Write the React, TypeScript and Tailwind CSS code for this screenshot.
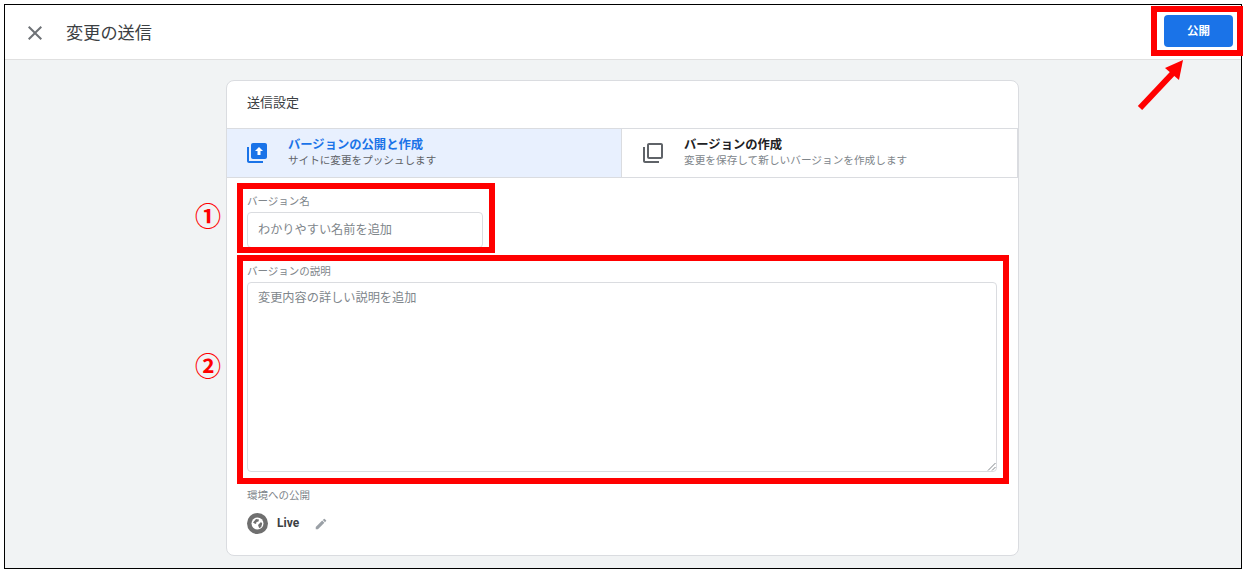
const jp = 'font-["Roboto","Noto_Sans_CJK_JP",sans-serif]'

function CloseIcon() {
  return (
    <svg width="24" height="24" viewBox="0 0 24 24" fill="#5f6368" className="opacity-90">
      <path d="M19 6.41 17.59 5 12 10.59 6.41 5 5 6.41 10.59 12 5 17.59 6.41 19 12 13.41 17.59 19 19 17.59 13.41 12z" />
    </svg>
  )
}

function PublishIcon() {
  return (
    <svg width="24" height="24" viewBox="0 0 24 24" fill="#1a73e8">
      <path d="M4 6H2v14c0 1.1.9 2 2 2h14v-2H4V6z" />
      <path d="M20 2H8c-1.1 0-2 .9-2 2v12c0 1.1.9 2 2 2h12c1.1 0 2-.9 2-2V4c0-1.100-.9-2-2-2z" />
      <path fill="#fff" d="M14 6l-4 4h2.500v4h3v-4H18z" />
    </svg>
  )
}

function CreateIcon() {
  return (
    <svg width="24" height="24" viewBox="0 0 24 24" fill="#5f6368">
      <path d="M4 6H2v14c0 1.100.9 2 2 2h14v-2H4V6z" />
      <path d="M20 2H8c-1.100 0-2 .9-2 2v12c0 1.100.9 2 2 2h12c1.100 0 2-.9 2-2V4c0-1.100-.9-2-2-2zm0 14H8V4h12v12z" />
    </svg>
  )
}

function GlobeIcon() {
  return (
    <svg width="21" height="21" viewBox="0 0 21 21">
      <circle cx="10.500" cy="10.500" r="10.500" fill="#6f6f6f" />
      <circle cx="10.500" cy="10.500" r="6" fill="#fff" />
      <path fill="#6f6f6f" d="M6 9.500l3-3.500 3 .5-.5 2-2 .5-.5 2-1.500-.5zM11 12l3-3 1.200 1.500-1 3.500-2 1.200z" />
    </svg>
  )
}

function PencilIcon() {
  return (
    <svg width="14" height="14" viewBox="0 0 24 24" fill="#9aa0a6">
      <path d="M3 17.250V21h3.750L17.810 9.940l-3.750-3.750L3 17.250zM20.710 7.040a1 1 0 0 0 0-1.410l-2.340-2.340a1 1 0 0 0-1.410 0l-1.830 1.830 3.750 3.750 1.830-1.830z" />
    </svg>
  )
}

function FieldLabel({ children }: { children: string }) {
  return <div className="text-[10.5px] leading-[14px] text-[#80868b]">{children}</div>
}

export default function App() {
  return (
    <div className={`relative h-[573px] w-[1248px] overflow-hidden bg-white pt-1 pr-[6px] pb-1 pl-1 ${jp}`}>
      <div className="h-[565px] overflow-hidden border border-black bg-[#f1f3f4]">
        <header className="flex h-[55px] items-start justify-between border-b border-[#e0e0e0] bg-white pr-2">
          <div className="mt-[14px] flex items-center">
            <div className="ml-[18px]">
              <CloseIcon />
            </div>
            <h1 className="ml-[19px] pt-[2px] text-[17.2px] font-normal text-[#3c4043]">変更の送信</h1>
          </div>
          <button className="mt-[10px] h-8 w-[69px] rounded bg-[#1a73e8] pt-[2px] text-[11.5px] font-bold text-white">公開</button>
        </header>

        <main className="mt-5 ml-[221px] h-[476px] w-[793px] rounded-lg border border-[#dadce0] bg-white">
          <div className="flex h-[48px] items-center border-b border-[#dadce0] pb-[3px] pl-[20px] text-[13px] text-[#3c4043]">
            送信設定
          </div>

          <div className="flex h-[49px] border-b border-[#dadce0]">
            <div className="flex w-[394px] items-center bg-[#e8f0fe] pl-[18px]">
              <PublishIcon />
              <div className="ml-[19px]">
                <div className="text-[12.3px] leading-[15px] font-bold text-[#1a73e8]">バージョンの公開と作成</div>
                <div className="text-[10.6px] leading-[15px] text-[#5f6368]">サイトに変更をプッシュします</div>
              </div>
            </div>
            <div className="flex flex-1 items-center border-r border-l border-[#dadce0] pl-[19px]">
              <CreateIcon />
              <div className="ml-[19px]">
                <div className="text-[12.3px] leading-[15px] font-bold text-[#202124]">バージョンの作成</div>
                <div className="text-[10.67px] leading-[15px] text-[#80868b]">変更を保存して新しいバージョンを作成します</div>
              </div>
            </div>
          </div>

          <div className="pt-[17px] pl-5">
            <FieldLabel>バージョン名</FieldLabel>
            <div className="mt-[3px] flex h-9 w-[236px] items-center rounded border border-[#dadce0] pl-[10px] text-[12.2px] text-[#80868b]">
              わかりやすい名前を追加
            </div>

            <div className="mt-[17px]">
              <FieldLabel>バージョンの説明</FieldLabel>
            </div>
            <div className="relative mt-[3px] h-[190px] w-[750px] rounded border border-[#dadce0] pt-[6px] pl-[10px] text-[12.2px] leading-[18px] text-[#80868b]">
              変更内容の詳しい説明を追加
              <svg width="9" height="9" viewBox="0 0 9 9" className="absolute right-0 bottom-0" stroke="#80868b" strokeWidth="1">
                <path d="M1 8.500 8.500 1M5 8.500 8.500 5" />
              </svg>
            </div>

            <div className="mt-[17px]">
              <FieldLabel>環境への公開</FieldLabel>
            </div>
            <div className="mt-[10px] flex items-center">
              <GlobeIcon />
              <span className="ml-[9px] pb-[2px] text-[12px] font-bold text-[#3c4043]">Live</span>
              <span className="ml-[15px]">
                <PencilIcon />
              </span>
            </div>
          </div>
        </main>
      </div>

      {/* annotations drawn over the screenshot */}
      <div className="absolute top-[6px] left-[1151px] h-[50px] w-[92px] border-[6px] border-[#ff0000]" />
      <div className="absolute top-[183px] left-[237px] h-[70px] w-[258px] border-[6px] border-[#ff0000]" />
      <div className="absolute top-[255px] left-[237px] h-[229px] w-[772px] border-[6px] border-[#ff0000]" />
      <div className="absolute top-[201px] left-[195px] text-[26px] leading-8 font-bold text-[#ff0000]">①</div>
      <div className="absolute top-[351px] left-[195px] text-[26px] leading-8 font-bold text-[#ff0000]">②</div>
      <svg width="52" height="54" viewBox="0 0 52 54" className="absolute top-[58px] left-[1135px]">
        <path d="M5 50 38 15" stroke="#ff0000" strokeWidth="6" />
        <path d="M48 2 30 10 44 22z" fill="#ff0000" />
      </svg>
    </div>
  )
}
